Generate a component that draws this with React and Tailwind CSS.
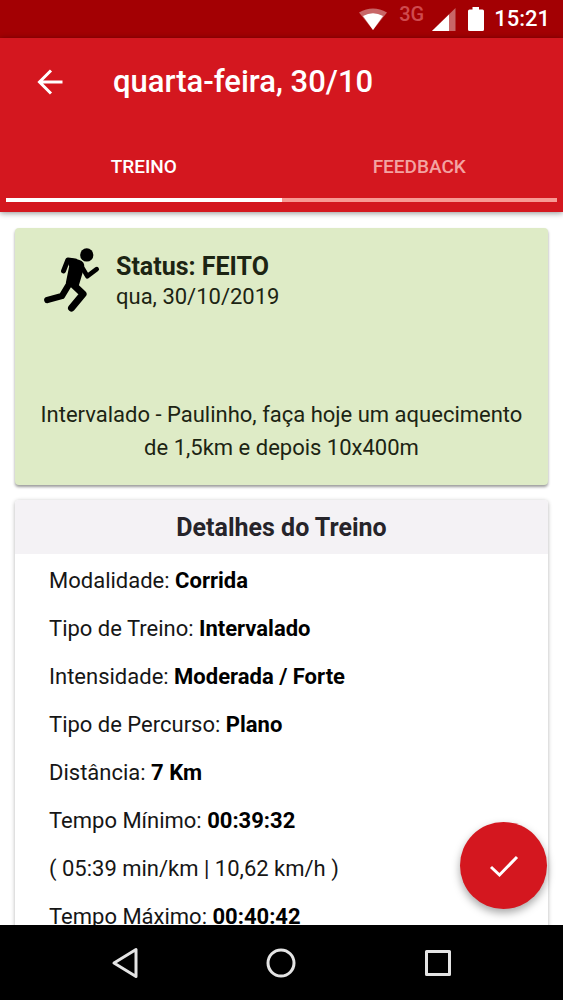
import { useState } from 'react';

const tabs = ['Treino', 'Feedback'];

const details = [
  { label: 'Modalidade:', value: 'Corrida' },
  { label: 'Tipo de Treino:', value: 'Intervalado' },
  { label: 'Intensidade:', value: 'Moderada / Forte' },
  { label: 'Tipo de Percurso:', value: 'Plano' },
  { label: 'Distância:', value: '7 Km' },
  { label: 'Tempo Mínimo:', value: '00:39:32' },
  { label: '( 05:39 min/km | 10,62 km/h )' },
  { label: 'Tempo Máximo:', value: '00:40:42' },
];

function StatusBar() {
  return (
    <div className="flex h-[38px] shrink-0 items-center justify-end bg-[#a30003] pr-[13px] text-white">
      <svg className="h-[22px] w-7" viewBox="0 0 28 22" fill="currentColor" aria-hidden="true">
        <path d="M0 4.5Q14 -3.5 28 4.5L14 22Z" opacity="0.4" />
        <path d="M4 8Q14 2.500 24 8L14 22Z" />
      </svg>
      <span className="ml-3 pb-[10px] text-xl leading-6 font-medium text-[#cf4a4e]">3G</span>
      <svg className="ml-2 h-[23px] w-6" viewBox="0 0 24 23" fill="currentColor" aria-hidden="true">
        <path d="M0 23L23.500 0V23Z" opacity="0.4" />
        <path d="M0 23L17 6.500V23Z" />
      </svg>
      <svg className="ml-3 h-6 w-4" viewBox="0 0 16 24" fill="currentColor" aria-hidden="true">
        <path d="M4.500 0H11V2.500H14.500Q16 2.500 16 4V22.500Q16 24 14.500 24H1.500Q0 24 0 22.500V4Q0 2.500 1.500 2.500H4.500Z" />
      </svg>
      <span className="ml-[10px] text-[22px] leading-6 font-medium">15:21</span>
    </div>
  );
}

function Header({ active, onChange }) {
  return (
    <header className="relative z-10 shrink-0 bg-[#d4171f] pb-[10px] text-white shadow-[0_1px_6px_rgba(0,0,0,0.45)]">
      <div className="flex h-[87px] items-center pl-9">
        <button type="button" aria-label="Voltar" className="w-[77px]">
          <svg className="h-7 w-7" viewBox="0 0 28 28" fill="none" stroke="currentColor" strokeWidth="3" aria-hidden="true">
            <path d="M26.500 14H4M15 2.500L3.500 14L15 25.500" />
          </svg>
        </button>
        <h1 className="text-[31px] leading-9 font-medium">quarta-feira, 30/10</h1>
      </div>

      <div role="tablist" className="flex px-[6px]">
        {tabs.map((tab, i) => (
          <button
            key={tab}
            type="button"
            role="tab"
            aria-selected={active === i}
            onClick={() => onChange(i)}
            className={
              active === i
                ? 'h-[77px] flex-1 border-b-4 border-white pt-3 text-[19px] font-medium uppercase text-white'
                : 'h-[77px] flex-1 border-b-4 border-[#f79a94] pt-3 text-[19px] font-medium uppercase text-[#f3a3a2]'
            }
          >
            {tab}
          </button>
        ))}
      </div>
    </header>
  );
}

function Runner() {
  return (
    <svg className="h-16 w-[57px]" viewBox="130 85 170 193" fill="none" stroke="#000" strokeLinecap="round" strokeLinejoin="round" aria-hidden="true">
      <circle cx="261" cy="106" r="20" fill="#000" stroke="none" />
      <path d="M206 120L236 125Q251 129 248 144L231 201L203 190L213 140Z" fill="#000" strokeWidth="10" />
      <path d="M226 124L204 121L191 154" strokeWidth="15" />
      <path d="M246 142L263 170L291 149" strokeWidth="14" />
      <path d="M210 190L186 230L142 242" strokeWidth="19" />
      <path d="M219 194L250 224L215 266" strokeWidth="21" />
    </svg>
  );
}

function StatusCard() {
  return (
    <section className="rounded-sm bg-[#deebc6] px-5 pb-5 pt-5 text-[#1c2413] shadow-[0_2px_3px_rgba(0,0,0,0.4)]">
      <div className="flex pl-2">
        <Runner />
        <div className="ml-4">
          <h2 className="pt-[3px] text-[25px] leading-8 font-bold">Status: FEITO</h2>
          <p className="text-[22px] leading-7">qua, 30/10/2019</p>
        </div>
      </div>
      <p className="mt-[86px] pb-px text-center text-[22px] leading-[33px]">
        Intervalado - Paulinho, faça hoje um aquecimento de 1,5km e depois 10x400m
      </p>
    </section>
  );
}

function DetailsCard() {
  return (
    <section className="mt-[15px] overflow-hidden rounded-sm bg-white shadow-[0_1px_4px_rgba(0,0,0,0.3)]">
      <h2 className="bg-[#f4f2f5] pb-[10px] pt-3 text-center text-[25px] leading-8 font-bold text-[#26242a]">
        Detalhes do Treino
      </h2>
      <ul className="px-[34px] pb-4 pt-[3px] text-[22px] leading-[48px] text-[#161616]">
        {details.map(({ label, value }) => (
          <li key={label}>
            {label} {value && <strong className="font-bold text-black">{value}</strong>}
          </li>
        ))}
      </ul>
    </section>
  );
}

function NavBar() {
  return (
    <nav className="flex h-[75px] shrink-0 items-center justify-around bg-black px-[47px] text-[#e4e4e4]">
      <button type="button" aria-label="Voltar">
        <svg className="h-8 w-8" viewBox="0 0 32 32" fill="none" stroke="currentColor" strokeWidth="3" strokeLinejoin="round" aria-hidden="true">
          <path d="M27 2.500V29.500L5 16Z" />
        </svg>
      </button>
      <button type="button" aria-label="Início">
        <svg className="h-8 w-8" viewBox="0 0 32 32" fill="none" stroke="currentColor" strokeWidth="3" aria-hidden="true">
          <circle cx="16" cy="16" r="13" />
        </svg>
      </button>
      <button type="button" aria-label="Recentes">
        <svg className="h-8 w-8" viewBox="0 0 32 32" fill="none" stroke="currentColor" strokeWidth="3" strokeLinejoin="round" aria-hidden="true">
          <rect x="4.500" y="4.500" width="23" height="23" />
        </svg>
      </button>
    </nav>
  );
}

export default function App() {
  const [active, setActive] = useState(0);

  return (
    <div className="flex h-screen flex-col overflow-hidden bg-white font-[Roboto,sans-serif]">
      <StatusBar />
      <Header active={active} onChange={setActive} />
      <div className="relative min-h-0 flex-1">
        <main className="h-full overflow-y-auto px-[15px] pt-4 [scrollbar-width:none]">
          <StatusCard />
          <DetailsCard />
        </main>
        {/* Floating confirm button */}
        <button
          type="button"
          aria-label="Concluir treino"
          className="absolute bottom-4 right-4 flex h-[87px] w-[87px] items-center justify-center rounded-full bg-[#d4171f] text-white shadow-[0_4px_8px_rgba(0,0,0,0.35)]"
        >
          <svg className="h-8 w-8" viewBox="0 0 32 32" fill="none" stroke="currentColor" strokeWidth="3" aria-hidden="true">
            <path d="M3 17L11.500 25L29 7" />
          </svg>
        </button>
      </div>
      <NavBar />
    </div>
  );
}
